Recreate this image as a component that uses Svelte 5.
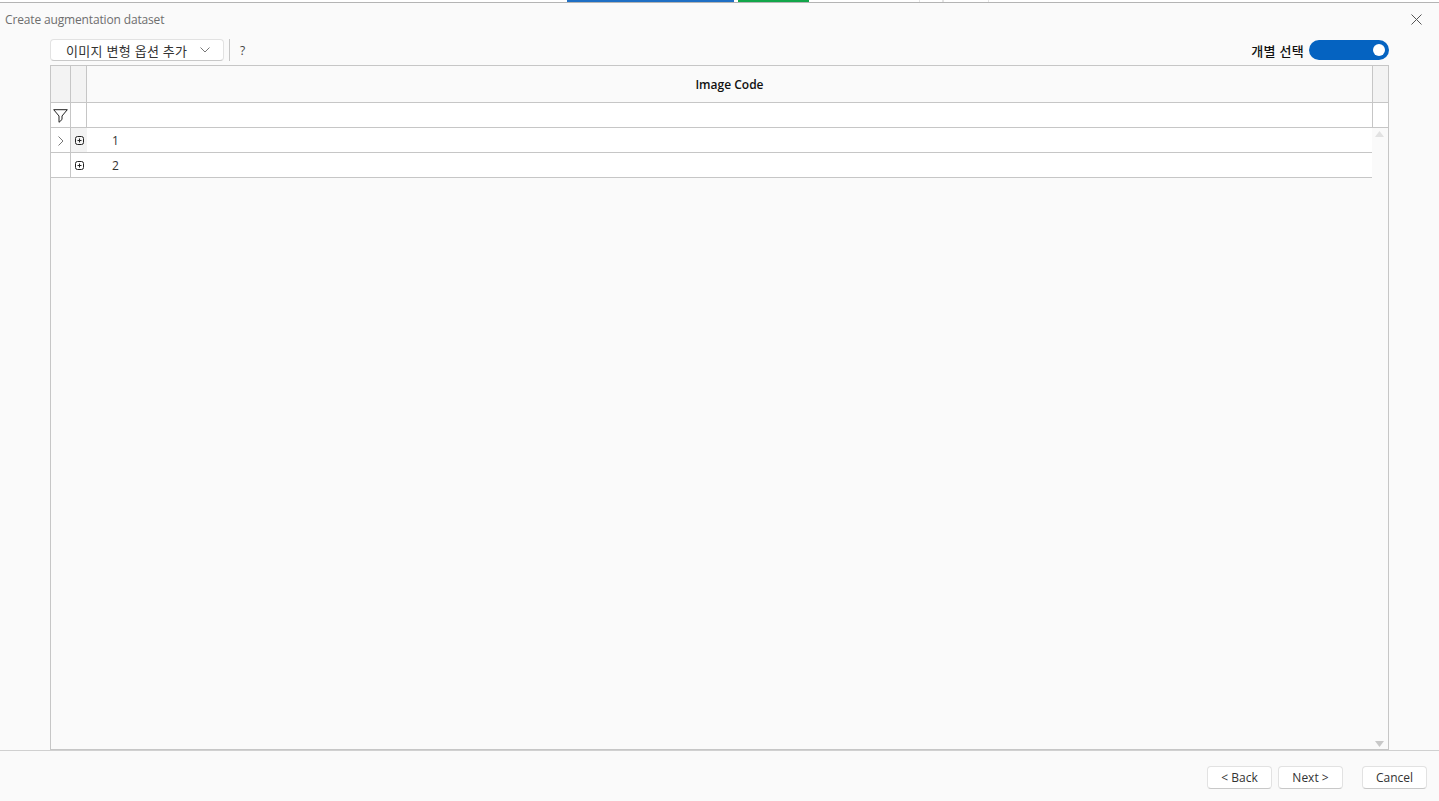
<script>
  const rows = [
    { code: 1, current: true },
    { code: 2, current: false }
  ];
</script>

<div class="page">
  <div class="taskbar">
    <span class="tab blue"></span>
    <span class="tab green"></span>
    <span class="tab pale one"></span>
    <span class="tab pale two"></span>
  </div>

  <div class="dialog">
    <header class="titlebar">
      <span class="title">Create augmentation dataset</span>
      <button class="close" aria-label="Close">
        <svg width="11" height="11" viewBox="0 0 11 11"><path d="M.5.5l10 10M10.5.5l-10 10" stroke="#555" fill="none" /></svg>
      </button>
    </header>

    <div class="toolbar">
      <button class="dropdown">
        <span>이미지 변형 옵션 추가</span>
        <svg width="10" height="6" viewBox="0 0 10 6"><path d="M.5.5L5 5 9.500.5" stroke="#777" fill="none" /></svg>
      </button>
      <span class="sep"></span>
      <span class="help">?</span>
      <span class="grow"></span>
      <span class="toggle-label">개별 선택</span>
      <span class="toggle"><span class="knob"></span></span>
    </div>

    <div class="grid">
      <div class="row head">
        <div class="cell c1"></div>
        <div class="cell c2"></div>
        <div class="cell main">Image Code</div>
        <div class="cell c4"></div>
      </div>
      <div class="row filter">
        <div class="cell c1 white">
          <svg class="funnel" width="15" height="14" viewBox="0 0 15 14"><path d="M.7.7h13.6L9 7v3.500L6 13.300V7z" stroke="#222" fill="none" /></svg>
        </div>
        <div class="cell c2 white"></div>
        <div class="cell main white"></div>
        <div class="cell c4 white"></div>
      </div>
      <div class="body">
        <div class="rows">
          {#each rows as row}
            <div class="row data">
              <div class="cell c1 white">
                {#if row.current}
                  <svg class="chev" width="6" height="10" viewBox="0 0 6 10"><path d="M.5.5L5 5 .5 9.500" stroke="#777" fill="none" /></svg>
                {/if}
              </div>
              <div class="cell c2 plain" class:white={!row.current}>
                <svg width="9" height="9" viewBox="0 0 9 9"><rect x=".5" y=".5" width="8" height="8" rx="2" stroke="#222" fill="none" /><path d="M2.500 4.500h4M4.500 2.500v4" stroke="#222" fill="none" /></svg>
              </div>
              <div class="cell value">{row.code}</div>
            </div>
          {/each}
        </div>
        <div class="scroll">
          <svg width="9" height="6" viewBox="0 0 9 6"><path d="M4.500 0L9 6H0z" fill="#e2e2e2" /></svg>
          <svg width="9" height="6" viewBox="0 0 9 6"><path d="M0 0h9L4.500 6z" fill="#c8c8c8" /></svg>
        </div>
      </div>
    </div>

    <footer class="footer">
      <button class="btn">&lt; Back</button>
      <button class="btn next">Next &gt;</button>
      <button class="btn">Cancel</button>
    </footer>
  </div>
</div>

<style>
  :global(body) {
    margin: 0;
    background: #fafafa;
  }
  .page {
    height: 801px;
    display: flex;
    flex-direction: column;
    font-family: "Open Sans", "Noto Sans CJK KR", sans-serif;
    font-size: 12px;
    color: #222;
    overflow: hidden;
  }
  .taskbar {
    height: 2px;
    flex: none;
    display: flex;
    background: #fff;
    padding-left: 567px;
  }
  .tab {
    height: 2px;
  }
  .blue {
    width: 167px;
    background: #1f6fc4;
  }
  .green {
    width: 71px;
    margin-left: 4px;
    background: #12a64a;
  }
  .pale {
    border-left: 1px solid #e4e4e4;
    border-right: 1px solid #e4e4e4;
  }
  .one {
    width: 22px;
    margin-left: 110px;
  }
  .two {
    width: 44px;
  }
  .dialog {
    flex: 1;
    display: flex;
    flex-direction: column;
    border-top: 1px solid #b4b4b4;
    background: #fafafa;
    min-height: 0;
  }
  .titlebar {
    height: 36px;
    flex: none;
    display: flex;
    align-items: center;
    justify-content: space-between;
    padding: 0 17px 3px 5px;
    box-sizing: border-box;
  }
  .title {
    color: #6e6e6e;
    letter-spacing: -0.15px;
  }
  .close {
    display: flex;
    padding: 0;
    border: none;
    background: none;
  }
  .toolbar {
    display: flex;
    align-items: center;
    height: 22px;
    flex: none;
    padding: 0 50px;
    margin-bottom: 4px;
  }
  .dropdown {
    width: 174px;
    height: 22px;
    display: flex;
    align-items: center;
    justify-content: space-between;
    padding: 0 13px 0 15px;
    box-sizing: border-box;
    background: #fff;
    border: 1px solid #e2e2e2;
    border-bottom-color: #c8c8c8;
    border-radius: 4px;
    font: inherit;
    font-size: 13px;
    color: #333;
    letter-spacing: 0.3px;
  }
  .sep {
    width: 1px;
    height: 22px;
    background: #c6c6c6;
    margin-left: 5px;
  }
  .help {
    margin-left: 10px;
    color: #444;
  }
  .grow {
    flex: 1;
  }
  .toggle-label {
    font-size: 13px;
    font-weight: 500;
    color: #111;
    margin-right: 5px;
    letter-spacing: 0.3px;
  }
  .toggle {
    width: 80px;
    height: 20px;
    border-radius: 10px;
    background: #0563c1;
    display: flex;
    align-items: center;
    justify-content: flex-end;
    padding-right: 4px;
    box-sizing: border-box;
  }
  .knob {
    width: 12px;
    height: 12px;
    border-radius: 50%;
    background: #fff;
  }
  .grid {
    flex: 1;
    min-height: 0;
    margin: 0 50px;
    display: flex;
    flex-direction: column;
    border: 1px solid #c6c6c6;
  }
  .row {
    display: flex;
    flex: none;
  }
  .head {
    height: 37px;
    border-bottom: 1px solid #c6c6c6;
    box-sizing: border-box;
  }
  .filter {
    height: 25px;
    border-bottom: 1px solid #c6c6c6;
    box-sizing: border-box;
  }
  .cell {
    display: flex;
    align-items: center;
    justify-content: center;
    box-sizing: border-box;
  }
  .c1 {
    width: 20px;
    border-right: 1px solid #c6c6c6;
    background: #f3f3f3;
  }
  .c2 {
    width: 16px;
    border-right: 1px solid #c6c6c6;
    background: #f3f3f3;
  }
  .c2.plain {
    border-right: none;
    padding-left: 1px;
  }
  .main {
    flex: 1;
    border-right: 1px solid #c6c6c6;
    font-weight: 600;
    color: #111;
  }
  .c4 {
    width: 15px;
    background: #f3f3f3;
  }
  .head .main {
    background: #fafafa;
  }
  .white,
  .c4.white {
    background: #fff;
  }
  .funnel {
    margin-top: 2px;
  }
  .body {
    flex: 1;
    min-height: 0;
    display: flex;
  }
  .rows {
    flex: 1;
  }
  .data {
    height: 25px;
    background: #fff;
    border-bottom: 1px solid #c6c6c6;
    box-sizing: border-box;
  }
  .chev {
    margin-left: 1px;
    margin-top: 1px;
  }
  .value {
    flex: 1;
    justify-content: flex-start;
    padding-left: 25px;
    color: #333;
  }
  .scroll {
    width: 16px;
    flex: none;
    background: #fafafa;
    display: flex;
    flex-direction: column;
    align-items: center;
    justify-content: space-between;
    padding: 3px 1px 2px 0;
    box-sizing: border-box;
  }
  .footer {
    height: 51px;
    flex: none;
    border-top: 1px solid #d0d0d0;
    box-sizing: border-box;
    display: flex;
    justify-content: flex-end;
    align-items: flex-start;
    padding: 15px 12px 0 0;
    gap: 6px;
  }
  .btn {
    width: 65px;
    height: 23px;
    padding: 0;
    background: #fff;
    border: 1px solid #e2e2e2;
    border-bottom-color: #c8c8c8;
    border-radius: 4px;
    font: inherit;
    color: #333;
  }
  .next {
    margin-right: 13px;
  }
</style>
